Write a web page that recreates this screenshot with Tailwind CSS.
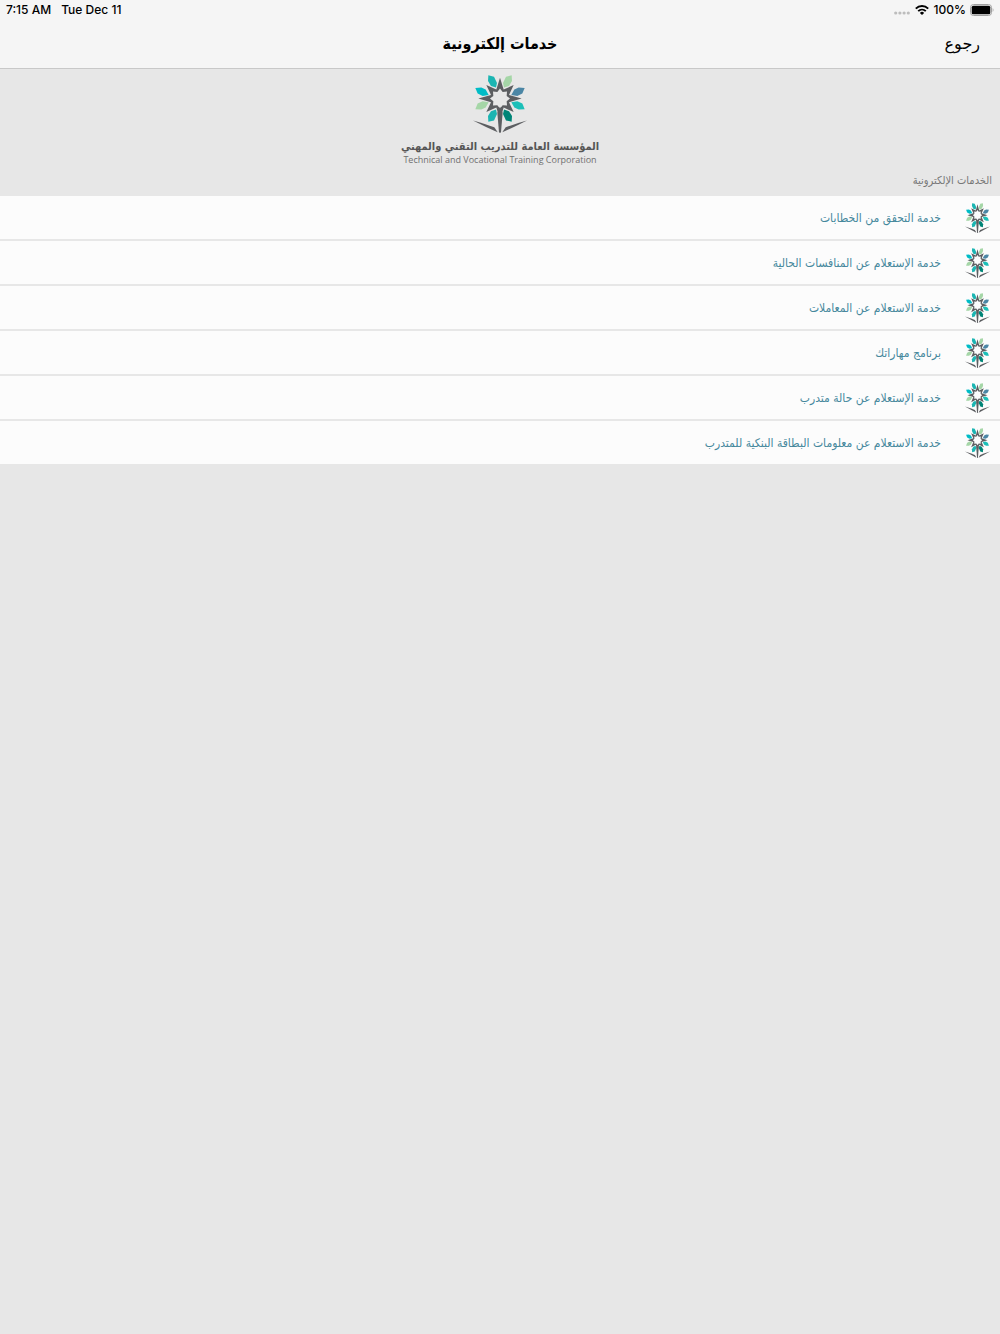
<!doctype html>
<html lang="ar" dir="rtl">
    <head>
        <meta charset="UTF-8" />
        <meta name="viewport" content="width=device-width, initial-scale=1.0" />
        <title>خدمات إلكترونية</title>
        <script src="https://cdn.jsdelivr.net/npm/@tailwindcss/browser@4"></script>
    </head>
    <body class="bg-[#e7e7e7] min-h-screen font-['DejaVu_Sans_Condensed','DejaVu_Sans',sans-serif]">
        <!-- Shared emblem -->
        <svg class="hidden" aria-hidden="true">
            <symbol id="emblem" viewBox="26 16 162 175" preserveAspectRatio="none">
                <path fill="#1cb5b2" d="M72 17L89 21L98 40L95 54L80 49L71 34Z" />
                <path fill="#a5d6a7" d="M142 17L125 21L116 40L119 54L134 49L143 34Z" />
                <path fill="#4b86a5" d="M181 55L174 72L159 79L141 76L150 60L163 54Z" />
                <path fill="#1cbfb8" d="M181 119L174 102L159 95L141 98L150 114L163 120Z" />
                <path fill="#008577" d="M142 157L125 153L116 134L119 120L134 125L143 140Z" />
                <path fill="#1cb5b2" d="M72 157L89 153L98 134L95 120L80 125L71 140Z" />
                <path fill="#a5d6a7" d="M33 119L40 102L55 95L73 98L64 114L51 120Z" />
                <path fill="#00bcc6" d="M33 55L40 72L55 79L73 76L64 60L51 54Z" />
                <g fill="#5c5e61">
                    <path
                        fill-rule="evenodd"
                        d="M107 24L118 60L148 46L134 76L172 87L134 98L148 128L118 114L107 150L96 114L66 128L80 98L42 87L80 76L66 46L96 60ZM107 57L99 67L86 66L87 79L77 87L87 95L86 108L99 107L107 117L115 107L128 108L127 95L137 87L127 79L128 66L115 67Z"
                    />
                    <path d="M107 112L115 130L110 189L107 191L104 189L99 130Z" />
                    <path d="M26 153Q64 163 90 174L100 189Q65 173 26 153Z" />
                    <path d="M188 153Q150 163 124 174L114 189Q149 173 188 153Z" />
                </g>
            </symbol>
        </svg>

        <header class="bg-[#f5f5f5] border-b border-[#c8c8c8]">
            <div
                dir="ltr"
                class="flex h-5 items-center justify-between pl-1.5 pr-1.5 font-['Inter',sans-serif] text-xs font-medium text-black"
            >
                <div class="flex gap-2.5">
                    <span>7:15 AM</span>
                    <span>Tue Dec 11</span>
                </div>
                <div class="flex items-center gap-1">
                    <svg class="mt-1.5 h-1 w-4" viewBox="0 0 16 4" fill="#bdbdbd">
                        <circle cx="1.7" cy="2" r="1.6" />
                        <circle cx="5.9" cy="2" r="1.6" />
                        <circle cx="10.1" cy="2" r="1.6" />
                        <circle cx="14.3" cy="2" r="1.6" />
                    </svg>
                    <svg class="h-3 w-4" viewBox="0 0 16 12" fill="none" stroke="#000">
                        <path d="M1.8 4.6A9 9 0 0 1 14.2 4.6" stroke-width="2" />
                        <path d="M4.2 7.1A5.5 5.5 0 0 1 11.8 7.1" stroke-width="1.9" />
                        <path d="M8 11L5.9 8.9A3 3 0 0 1 10.1 8.9Z" fill="#000" stroke="none" />
                    </svg>
                    <span>100%</span>
                    <svg class="h-3 w-6" viewBox="0 0 24 12">
                        <rect x=".5" y=".5" width="21" height="11" rx="3" fill="none" stroke="#a0a0a0" />
                        <rect x="1.7" y="1.7" width="18.6" height="8.6" rx="1.6" />
                        <path d="M22.7 4Q24.3 6 22.7 8Z" fill="#a0a0a0" />
                    </svg>
                </div>
            </div>
            <nav class="grid h-12 grid-cols-3 items-center px-5 text-black">
                <button type="button" class="justify-self-start font-['DejaVu_Sans',sans-serif] text-base">رجوع</button>
                <h1 class="justify-self-center whitespace-nowrap text-base font-bold">خدمات إلكترونية</h1>
            </nav>
        </header>

        <main>
            <div class="flex flex-col items-center pt-1.5">
                <svg class="h-[58px] w-[54px]" role="img" aria-label="شعار المؤسسة"><use href="#emblem" /></svg>
                <p class="mt-1.5 text-[11px] leading-4 font-bold text-[#555]">
                    المؤسسة العامة للتدريب التقني والمهني
                </p>
                <p dir="ltr" class="font-['Open_Sans',sans-serif] text-[9px] leading-[10px] text-[#707070]">
                    Technical and Vocational Training Corporation
                </p>
            </div>

            <h2 class="px-2 pt-2 pb-2 text-[11px] leading-[15px] text-[#777]">الخدمات الإلكترونية</h2>

            <ul class="flex flex-col gap-0.5 text-xs text-[#46889c]">
                <li class="bg-[#fcfcfc]">
                    <a href="#" class="flex h-[43px] items-center gap-6 px-2.5">
                        <svg class="h-[30px] w-[25px]"><use href="#emblem" /></svg>
                        <span>خدمة التحقق من الخطابات</span>
                    </a>
                </li>
                <li class="bg-[#fcfcfc]">
                    <a href="#" class="flex h-[43px] items-center gap-6 px-2.5">
                        <svg class="h-[30px] w-[25px]"><use href="#emblem" /></svg>
                        <span>خدمة الإستعلام عن المنافسات الحالية</span>
                    </a>
                </li>
                <li class="bg-[#fcfcfc]">
                    <a href="#" class="flex h-[43px] items-center gap-6 px-2.5">
                        <svg class="h-[30px] w-[25px]"><use href="#emblem" /></svg>
                        <span>خدمة الاستعلام عن المعاملات</span>
                    </a>
                </li>
                <li class="bg-[#fcfcfc]">
                    <a href="#" class="flex h-[43px] items-center gap-6 px-2.5">
                        <svg class="h-[30px] w-[25px]"><use href="#emblem" /></svg>
                        <span>برنامج مهاراتك</span>
                    </a>
                </li>
                <li class="bg-[#fcfcfc]">
                    <a href="#" class="flex h-[43px] items-center gap-6 px-2.5">
                        <svg class="h-[30px] w-[25px]"><use href="#emblem" /></svg>
                        <span>خدمة الإستعلام عن حالة متدرب</span>
                    </a>
                </li>
                <li class="bg-[#fcfcfc]">
                    <a href="#" class="flex h-[43px] items-center gap-6 px-2.5">
                        <svg class="h-[30px] w-[25px]"><use href="#emblem" /></svg>
                        <span>خدمة الاستعلام عن معلومات البطاقة البنكية للمتدرب</span>
                    </a>
                </li>
            </ul>
        </main>
    </body>
</html>
